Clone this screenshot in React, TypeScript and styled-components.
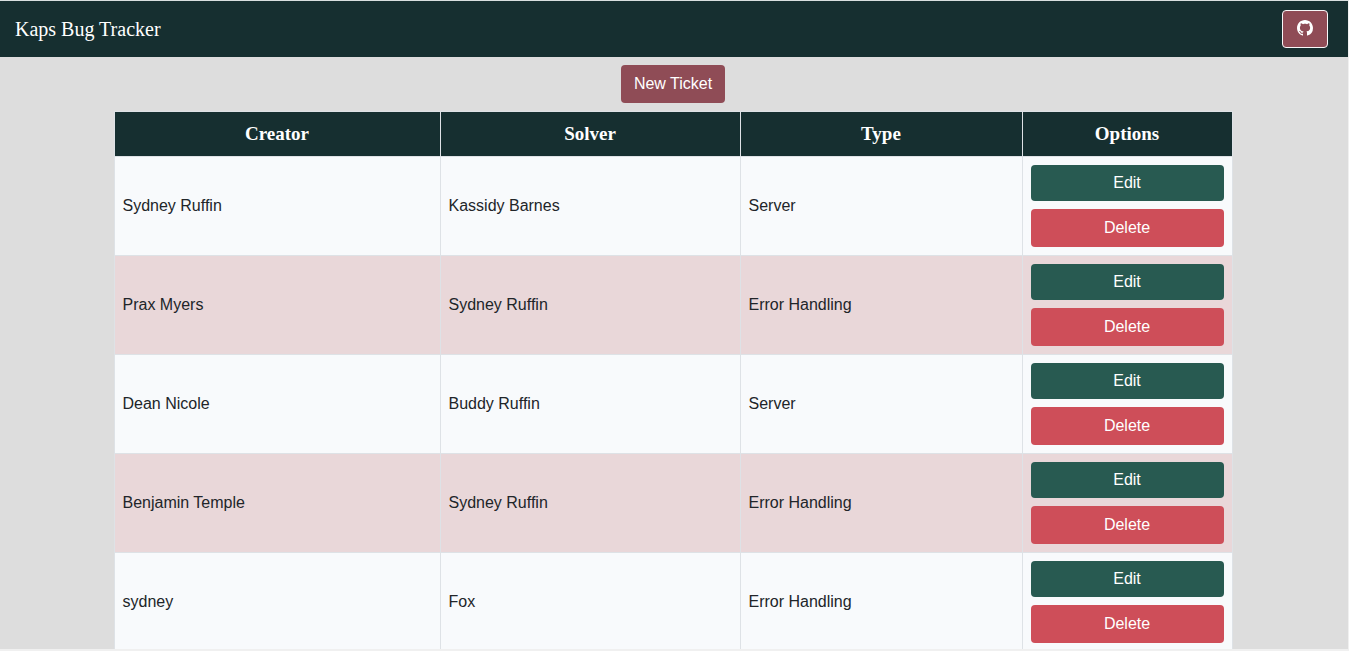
import React from "react";
import styled, { createGlobalStyle } from "styled-components";

const sans = `"Liberation Sans", Arial, sans-serif`;
const serif = `"Liberation Serif", "Times New Roman", serif`;

const GlobalStyle = createGlobalStyle`
  *, *::before, *::after { box-sizing: border-box; }
  body {
    margin: 0;
    background: #dddddd;
    color: #212529;
    font: 16px/24px ${sans};
  }
`;

const Page = styled.div`
  height: 100vh;
  display: flex;
  flex-direction: column;
  overflow: hidden;
  border: solid #f0f0f0;
  border-width: 1px 1px 2px 0;
  border-top-color: #d9dfdf;
`;

const Navbar = styled.nav`
  flex: none;
  display: flex;
  align-items: center;
  justify-content: space-between;
  height: 56px;
  padding: 0 20px 0 15px;
  background: #162f30;
`;

const Brand = styled.a`
  color: #ffffff;
  font: 20px/30px ${serif};
  text-decoration: none;
`;

const Button = styled.button<{ $tone: string }>`
  height: 38px;
  padding: 0 13px;
  border: 0;
  border-radius: 4px;
  background: ${(p) => p.$tone};
  color: #ffffff;
  font: 16px/24px ${sans};
  cursor: pointer;
`;

const IconLink = styled.a`
  display: flex;
  align-items: center;
  justify-content: center;
  width: 46px;
  height: 38px;
  padding-bottom: 2px;
  border: 1px solid #f8f9fa;
  border-radius: 4px;
  background: #8f4c56;
  color: #ffffff;
`;

const Main = styled.main`
  flex: 1;
  min-height: 0;
  overflow: hidden;
  display: flex;
  flex-direction: column;
  align-items: center;
  gap: 8px;
  padding: 8px 2px 0 0;

  > * { flex: none; }
`;

const Table = styled.table`
  width: 83%;
  table-layout: fixed;
  border-collapse: collapse;
`;

const Column = styled.col<{ $width: number }>`
  width: ${(p) => p.$width}px;
`;

const HeadCell = styled.th`
  padding: 8px;
  border: 1px solid #dee2e6;
  background: #162f30;
  color: #ffffff;
  font: bold 19px/28px ${serif};
`;

const Row = styled.tr`
  background: #f8fafc;
  &:nth-child(even) { background: #e9d7d9; }
`;

const Cell = styled.td`
  padding: 8px;
  border: 1px solid #dee2e6;
  vertical-align: middle;
`;

const Actions = styled.div`
  display: flex;
  flex-direction: column;
  gap: 8px;
`;

const EditButton = styled(Button)`
  height: 36px;
`;

const columns = [
  { name: "Creator", width: 326 },
  { name: "Solver", width: 300 },
  { name: "Type", width: 282 },
  { name: "Options", width: 210 },
];

const tickets = [
  { creator: "Sydney Ruffin", solver: "Kassidy Barnes", type: "Server" },
  { creator: "Prax Myers", solver: "Sydney Ruffin", type: "Error Handling" },
  { creator: "Dean Nicole", solver: "Buddy Ruffin", type: "Server" },
  { creator: "Benjamin Temple", solver: "Sydney Ruffin", type: "Error Handling" },
  { creator: "sydney", solver: "Fox", type: "Error Handling" },
];

const GithubIcon = () => (
  <svg width="16" height="16" viewBox="0 0 16 16" fill="currentColor" aria-hidden="true">
    <path d="M8 0C3.58 0 0 3.58 0 8c0 3.54 2.29 6.53 5.47 7.59.4.07.55-.17.55-.38 0-.19-.01-.82-.01-1.49-2.01.37-2.53-.49-2.69-.94-.09-.23-.48-.94-.82-1.13-.28-.15-.68-.52-.01-.53.63-.01 1.08.58 1.23.82.72 1.21 1.87.87 2.33.66.07-.52.28-.87.51-1.07-1.78-.2-3.64-.89-3.64-3.95 0-.87.31-1.59.82-2.15-.08-.2-.36-1.02.08-2.12 0 0 .67-.21 2.2.82.64-.18 1.32-.27 2-.27s1.36.09 2 .27c1.53-1.04 2.2-.82 2.2-.82.44 1.1.16 1.92.08 2.12.51.56.82 1.27.82 2.15 0 3.07-1.87 3.75-3.65 3.95.29.25.54.73.54 1.48 0 1.07-.01 1.93-.01 2.2 0 .21.15.46.55.38A8.01 8.01 0 0 0 16 8c0-4.42-3.58-8-8-8z" />
  </svg>
);

export default function App() {
  return (
    <>
      <GlobalStyle />
      <Page>
        <Navbar>
          <Brand href="#">Kaps Bug Tracker</Brand>
          <IconLink href="#" aria-label="GitHub">
            <GithubIcon />
          </IconLink>
        </Navbar>
        <Main>
          <Button type="button" $tone="#8f4c56">New Ticket</Button>
          <Table>
            <colgroup>
              {columns.map((c) => (
                <Column key={c.name} $width={c.width} />
              ))}
            </colgroup>
            <thead>
              <tr>
                {columns.map((c) => (
                  <HeadCell key={c.name} scope="col">{c.name}</HeadCell>
                ))}
              </tr>
            </thead>
            <tbody>
              {tickets.map((t) => (
                <Row key={t.creator}>
                  <Cell>{t.creator}</Cell>
                  <Cell>{t.solver}</Cell>
                  <Cell>{t.type}</Cell>
                  <Cell>
                    <Actions>
                      <EditButton type="button" $tone="#285a51">Edit</EditButton>
                      <Button type="button" $tone="#ce4e59">Delete</Button>
                    </Actions>
                  </Cell>
                </Row>
              ))}
            </tbody>
          </Table>
        </Main>
      </Page>
    </>
  );
}
